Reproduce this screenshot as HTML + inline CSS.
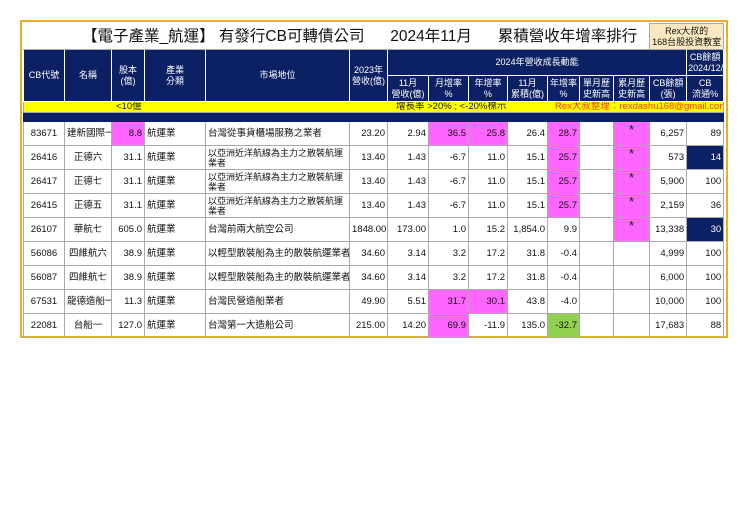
<!DOCTYPE html>
<html><head><meta charset="utf-8"><style>
body{margin:0;background:#fff;width:740px;height:523px;position:relative;font-family:"Liberation Sans","Noto Sans CJK TC",sans-serif;}
.wrap{position:absolute;left:20px;top:20px;width:704px;height:314px;border:2px solid #e8b020;}
table{position:absolute;left:1px;top:1px;border-collapse:collapse;table-layout:fixed;width:700px;}
td{border:1px solid #aaa;padding:0 2px;font-size:9.5px;line-height:12px;overflow:hidden;white-space:nowrap;color:#111;}
.h td{background:#0c2163;color:#fff;text-align:center;font-size:9px;border-color:#fff;line-height:11px;padding:0 1px;}
.d td{height:23px;text-align:right;}
.c{text-align:center!important}.l{text-align:left!important}
.s{vertical-align:top}
.s span{display:inline-block;height:11px;line-height:14px;font-size:13px;overflow:hidden;margin-top:1px}
.p{background:#ff66ff}.g{background:#92d050}.n{background:#0c2163!important;color:#fff!important}
.w{white-space:normal;line-height:10px!important;font-size:9px!important}
</style></head><body><div class="wrap"><table>
<colgroup><col style="width:41px"><col style="width:47px"><col style="width:33px"><col style="width:61px"><col style="width:144px"><col style="width:38px"><col style="width:41px"><col style="width:40px"><col style="width:39px"><col style="width:40px"><col style="width:32px"><col style="width:34px"><col style="width:36px"><col style="width:37px"><col style="width:37px"></colgroup>
<tr style="height:26px"><td colspan="13" style="font-size:15.5px;line-height:18px;padding-left:58px;border-color:#fff #aaa #aaa #fff">【電子產業_航運】 有發行CB可轉債公司 &nbsp;&nbsp;&nbsp;&nbsp; 2024年11月 &nbsp;&nbsp;&nbsp;&nbsp; 累積營收年增率排行</td><td colspan="2" class="c" style="background:#fbe8c0;font-size:9px;line-height:11px;padding:0">Rex大叔的<br>168台股投資教室</td></tr>
<tr class="h" style="height:26px"><td rowspan="2">CB代號</td><td rowspan="2">名稱</td><td rowspan="2">股本<br>(億)</td><td rowspan="2">產業<br>分類</td><td rowspan="2">市場地位</td><td rowspan="2">2023年<br>營收(億)</td><td colspan="8">2024年營收成長動能</td><td colspan="2">CB餘額<br>2024/12/6</td></tr>
<tr class="h" style="height:26px"><td>11月<br>營收(億)</td><td>月增率<br>%</td><td>年增率<br>%</td><td>11月<br>累積(億)</td><td>年增率<br>%</td><td>單月歷<br>史新高</td><td>累月歷<br>史新高</td><td>CB餘額<br>(張)</td><td>CB<br>流通%</td></tr>
<tr style="height:11px"><td colspan="15" style="background:#ffff00;position:relative;font-size:9.5px;line-height:10px;border-color:#aaa"><span style="position:absolute;left:92px;top:0">&lt;10億</span><span style="position:absolute;left:372px;top:0">增長率 &gt;20% ; &lt;-20%標示</span><span style="position:absolute;left:531px;top:0;color:#ff3300">Rex大叔整理：rexdashu168@gmail.com</span></td></tr>
<tr style="height:9px"><td colspan="15" style="background:#0c2163;border-color:#0c2163;line-height:8px"></td></tr>
<tr class="d"><td class="c">83671</td><td class="c">建新國際一</td><td class="p">8.8</td><td class="l">航運業</td><td class="l">台灣從事貨櫃場服務之業者</td><td>23.20</td><td>2.94</td><td class="p">36.5</td><td class="p">25.8</td><td>26.4</td><td class="p">28.7</td><td></td><td class="p c s"><span>*</span></td><td>6,257</td><td>89</td></tr>
<tr class="d"><td class="c">26416</td><td class="c">正德六</td><td>31.1</td><td class="l">航運業</td><td class="l w">以亞洲近洋航線為主力之散裝航運業者</td><td>13.40</td><td>1.43</td><td>-6.7</td><td>11.0</td><td>15.1</td><td class="p">25.7</td><td></td><td class="p c s"><span>*</span></td><td>573</td><td class="n">14</td></tr>
<tr class="d"><td class="c">26417</td><td class="c">正德七</td><td>31.1</td><td class="l">航運業</td><td class="l w">以亞洲近洋航線為主力之散裝航運業者</td><td>13.40</td><td>1.43</td><td>-6.7</td><td>11.0</td><td>15.1</td><td class="p">25.7</td><td></td><td class="p c s"><span>*</span></td><td>5,900</td><td>100</td></tr>
<tr class="d"><td class="c">26415</td><td class="c">正德五</td><td>31.1</td><td class="l">航運業</td><td class="l w">以亞洲近洋航線為主力之散裝航運業者</td><td>13.40</td><td>1.43</td><td>-6.7</td><td>11.0</td><td>15.1</td><td class="p">25.7</td><td></td><td class="p c s"><span>*</span></td><td>2,159</td><td>36</td></tr>
<tr class="d"><td class="c">26107</td><td class="c">華航七</td><td>605.0</td><td class="l">航運業</td><td class="l">台灣前兩大航空公司</td><td>1848.00</td><td>173.00</td><td>1.0</td><td>15.2</td><td>1,854.0</td><td>9.9</td><td></td><td class="p c s"><span>*</span></td><td>13,338</td><td class="n">30</td></tr>
<tr class="d"><td class="c">56086</td><td class="c">四維航六</td><td>38.9</td><td class="l">航運業</td><td class="l">以輕型散裝船為主的散裝航運業者</td><td>34.60</td><td>3.14</td><td>3.2</td><td>17.2</td><td>31.8</td><td>-0.4</td><td></td><td></td><td>4,999</td><td>100</td></tr>
<tr class="d"><td class="c">56087</td><td class="c">四維航七</td><td>38.9</td><td class="l">航運業</td><td class="l">以輕型散裝船為主的散裝航運業者</td><td>34.60</td><td>3.14</td><td>3.2</td><td>17.2</td><td>31.8</td><td>-0.4</td><td></td><td></td><td>6,000</td><td>100</td></tr>
<tr class="d"><td class="c">67531</td><td class="c">龍德造船一</td><td>11.3</td><td class="l">航運業</td><td class="l">台灣民營造船業者</td><td>49.90</td><td>5.51</td><td class="p">31.7</td><td class="p">30.1</td><td>43.8</td><td>-4.0</td><td></td><td></td><td>10,000</td><td>100</td></tr>
<tr class="d"><td class="c">22081</td><td class="c">台船一</td><td>127.0</td><td class="l">航運業</td><td class="l">台灣第一大造船公司</td><td>215.00</td><td>14.20</td><td class="p">69.9</td><td>-11.9</td><td>135.0</td><td class="g">-32.7</td><td></td><td></td><td>17,683</td><td>88</td></tr>
</table></div></body></html>
